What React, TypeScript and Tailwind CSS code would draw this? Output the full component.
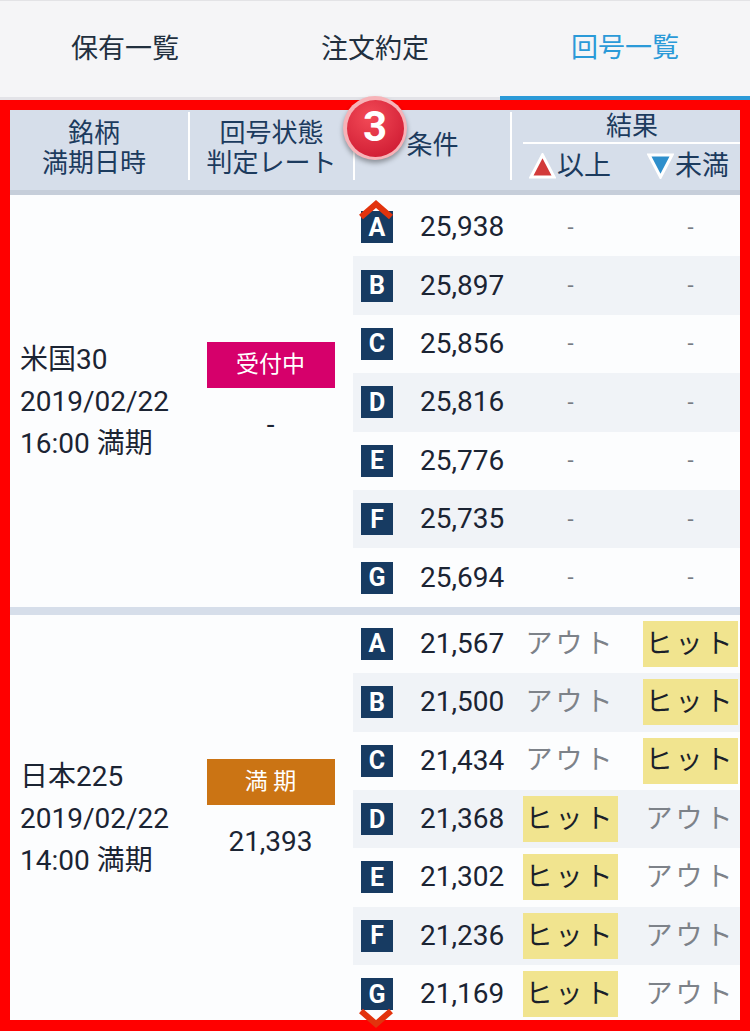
import React from "react";

type Row = {
  letter: string;
  value: string;
  over: string;
  under: string;
};

type Group = {
  name: string;
  date: string;
  time: string;
  status: string;
  statusClass: string;
  rate: string;
  rows: Row[];
};

const groups: Group[] = [
  {
    name: "米国30",
    date: "2019/02/22",
    time: "16:00 満期",
    status: "受付中",
    statusClass: "bg-[#d6006b]",
    rate: "-",
    rows: [
      { letter: "A", value: "25,938", over: "-", under: "-" },
      { letter: "B", value: "25,897", over: "-", under: "-" },
      { letter: "C", value: "25,856", over: "-", under: "-" },
      { letter: "D", value: "25,816", over: "-", under: "-" },
      { letter: "E", value: "25,776", over: "-", under: "-" },
      { letter: "F", value: "25,735", over: "-", under: "-" },
      { letter: "G", value: "25,694", over: "-", under: "-" },
    ],
  },
  {
    name: "日本225",
    date: "2019/02/22",
    time: "14:00 満期",
    status: "満 期",
    statusClass: "bg-[#cb7414]",
    rate: "21,393",
    rows: [
      { letter: "A", value: "21,567", over: "アウト", under: "ヒット" },
      { letter: "B", value: "21,500", over: "アウト", under: "ヒット" },
      { letter: "C", value: "21,434", over: "アウト", under: "ヒット" },
      { letter: "D", value: "21,368", over: "ヒット", under: "アウト" },
      { letter: "E", value: "21,302", over: "ヒット", under: "アウト" },
      { letter: "F", value: "21,236", over: "ヒット", under: "アウト" },
      { letter: "G", value: "21,169", over: "ヒット", under: "アウト" },
    ],
  },
];

function Result({ text }: { text: string }) {
  if (text === "ヒット") {
    return (
      <div className="w-[95px] h-[46px] bg-[#f1e48f] flex items-center justify-center text-[27px] tracking-[3px] text-[#1a1f2a]">
        ヒット
      </div>
    );
  }
  if (text === "アウト") {
    return (
      <div className="w-[95px] h-[46px] flex items-center justify-center text-[27px] tracking-[3px] text-[#7d8289]">
        アウト
      </div>
    );
  }
  return (
    <div className="w-[95px] h-[46px] flex items-center justify-center text-[22px] text-[#777c83]">
      {text}
    </div>
  );
}

function GroupBlock({ group }: { group: Group }) {
  return (
    <div className="flex bg-[#fcfdfe]">
      <div className="w-[178px] flex flex-col justify-center pl-[10px] text-[28px] leading-[42px] text-[#1b2433]">
        <div>{group.name}</div>
        <div>{group.date}</div>
        <div>{group.time}</div>
      </div>
      <div className="w-[165px] flex flex-col items-center justify-center pb-[16px]">
        <div
          className={`w-[128px] h-[46px] ${group.statusClass} text-white text-[23px] flex items-center justify-center`}
        >
          {group.status}
        </div>
        <div className="mt-[16px] text-[28px] leading-[42px] text-[#1b2433]">{group.rate}</div>
      </div>
      <div className="flex-1 flex flex-col">
        {group.rows.map((row, i) => (
          <div
            key={row.letter}
            className={`h-[58.4px] flex items-center pl-[8px] ${i % 2 === 1 ? "bg-[#f0f3f7]" : ""}`}
          >
            <div className="w-[32px] h-[32px] bg-[#173b62] text-white font-bold text-[25px] leading-none flex items-center justify-center">
              {row.letter}
            </div>
            <div className="w-[84px] ml-[27px] text-[28px] text-[#1b2433]">{row.value}</div>
            <div className="ml-[19px]">
              <Result text={row.over} />
            </div>
            <div className="ml-[25px]">
              <Result text={row.under} />
            </div>
          </div>
        ))}
      </div>
    </div>
  );
}

function App() {
  return (
    <div
      className="w-[750px] h-[1031px] overflow-hidden bg-white relative"
      style={{ fontFamily: "Roboto, 'Noto Sans CJK JP', sans-serif" }}
    >
      <div className="h-[100px] bg-[#f5f5f7] border-t border-[#e3e3e6] flex">
        <div className="flex-1 flex items-center justify-center border-b-[3px] border-[#e3e3e8] text-[27px] text-[#22303f]">
          保有一覧
        </div>
        <div className="flex-1 flex items-center justify-center border-b-[3px] border-[#e3e3e8] text-[27px] text-[#22303f]">
          注文約定
        </div>
        <div className="flex-1 flex items-center justify-center border-b-4 border-[#2b9ad8] text-[27px] text-[#2b9ad8]">
          回号一覧
        </div>
      </div>

      <div className="h-[931px] border-[10px] border-b-[11px] border-[#ff0000] overflow-hidden bg-[#fcfdfe]">
        <div className="h-[80px] bg-[#d6deea] flex text-[26px] leading-[30px] text-[#1c3b5e]">
          <div className="w-[178px] flex flex-col items-center justify-center pb-[4px] pr-[10px]">
            <div>銘柄</div>
            <div>満期日時</div>
          </div>
          <div className="w-[2px] bg-white mt-[2px] mb-[10px]" />
          <div className="w-[163px] flex flex-col items-center justify-center pb-[4px]">
            <div>回号状態</div>
            <div>判定レート</div>
          </div>
          <div className="w-[2px] bg-white mt-[2px] mb-[10px]" />
          <div className="w-[155px] flex items-center justify-center pb-[10px]">条件</div>
          <div className="w-[2px] bg-white mt-[2px] mb-[10px]" />
          <div className="flex-1 flex flex-col">
            <div className="h-[32px] flex items-center justify-center pl-[12px]">結果</div>
            <div className="h-[2px] bg-white ml-[11px]" />
            <div className="flex-1 flex items-center pl-[17px] text-[27px] pb-[2px]">
              <svg width="27" height="26" viewBox="0 0 27 26">
                <polygon points="13.5,2 25,24 2,24" fill="#d23a3a" stroke="#ffffff" strokeWidth="3" strokeLinejoin="miter" />
              </svg>
              <span className="ml-[1px]">以上</span>
              <svg className="ml-[36px]" width="27" height="26" viewBox="0 0 27 26">
                <polygon points="2,2 25,2 13.5,24" fill="#2e8fcc" stroke="#ffffff" strokeWidth="3" strokeLinejoin="miter" />
              </svg>
              <span className="ml-[1px]">未満</span>
            </div>
          </div>
        </div>
        <div className="h-[5px] bg-[#c6ceda]" />
        <div className="h-[3px]" />
        <GroupBlock group={groups[0]} />
        <div className="h-[8px] bg-[#d6deea]" />
        <GroupBlock group={groups[1]} />
      </div>

      <div className="absolute left-[343px] top-[96px] w-[64px] h-[64px] rounded-full bg-[#f7b3b8] shadow-[0_3px_5px_rgba(0,0,0,0.35)] flex items-center justify-center">
        <div className="w-[57px] h-[57px] rounded-full bg-[radial-gradient(circle_at_40%_30%,#f34a57,#c8132c)] flex items-center justify-center text-white font-bold text-[42px] leading-none pb-[2px]">
          3
        </div>
      </div>

      <svg className="absolute left-[358px] top-[199px]" width="36" height="22" viewBox="0 0 36 22">
        <polyline points="3,18 18,5 33,18" fill="none" stroke="#e2330d" strokeWidth="6" />
      </svg>
      <svg className="absolute left-[358px] top-[1007px]" width="36" height="22" viewBox="0 0 36 22">
        <polyline points="3,4 18,17 33,4" fill="none" stroke="#e2330d" strokeWidth="6" />
      </svg>
    </div>
  );
}

export default App;
